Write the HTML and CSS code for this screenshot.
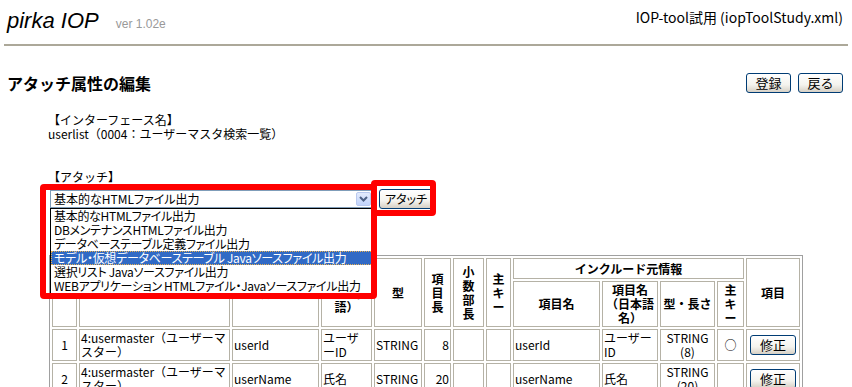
FILE: index.html
```html
<!DOCTYPE html>
<html lang="ja">
<head>
    <meta charset="UTF-8">
    <title>アタッチ属性の編集 - pirka IOP</title>
    <link rel="stylesheet" href="styles.css">
</head>
<body>
    <div class="header">
        <div class="brand"><span class="logo">pirka IOP</span><span class="version">ver 1.02e</span></div>
        <div class="project">IOP-tool試用 (iopToolStudy.xml)</div>
    </div>

    <div class="titlebar">
        <h1>アタッチ属性の編集</h1>
        <div class="actions">
            <button class="btn">登録</button>
            <button class="btn">戻る</button>
        </div>
    </div>

    <div class="content">
        <div class="field">
            <div>【インターフェース名】</div>
            <div>userlist（0004：ユーザーマスタ検索一覧）</div>
        </div>

        <div class="field">
            <div>【アタッチ】</div>
            <div class="attach-row">
                <div class="combo">
                    <span>基本的なHTMLファイル出力</span>
                    <span class="combo-arrow">
                        <svg width="9" height="6" viewBox="0 0 9 6"><path d="M1 1 L4.5 4.5 L8 1" fill="none" stroke="#4d6185" stroke-width="2"/></svg>
                    </span>
                    <ul class="combo-list">
                        <li>基本的なHTMLファイル出力</li>
                        <li>DBメンテナンスHTMLファイル出力</li>
                        <li>データベーステーブル定義ファイル出力</li>
                        <li class="selected">モデル・仮想データベーステーブル Javaソースファイル出力</li>
                        <li>選択リスト Javaソースファイル出力</li>
                        <li>WEBアプリケーション HTMLファイル・Javaソースファイル出力</li>
                    </ul>
                </div>
                <button class="btn btn-attach">アタッチ</button>
                <!-- 注記用の赤枠 -->
                <div class="mark mark-select"></div>
                <div class="mark mark-button"></div>
            </div>
        </div>

        <table class="items">
            <tr>
                <th rowspan="2" class="c-no">No</th>
                <th rowspan="2" class="c-table">テーブル</th>
                <th rowspan="2" class="c-name">項目名</th>
                <th rowspan="2" class="c-jname">項目名（日本語）</th>
                <th rowspan="2" class="c-type">型</th>
                <th rowspan="2" class="c-len">項<br>目<br>長</th>
                <th rowspan="2" class="c-dec">小<br>数<br>部<br>長</th>
                <th rowspan="2" class="c-key">主<br>キ<br>ー</th>
                <th colspan="4" class="group">インクルード元情報</th>
                <th rowspan="2" class="c-edit">項目</th>
            </tr>
            <tr class="sub">
                <th class="c-iname">項目名</th>
                <th class="c-ijname">項目名（日本語名）</th>
                <th class="c-itype">型・長さ</th>
                <th class="c-ikey">主<br>キ<br>ー</th>
            </tr>
            <tr>
                <td class="center">1</td>
                <td>4:usermaster（ユーザーマスター）</td>
                <td>userId</td>
                <td>ユーザーID</td>
                <td>STRING</td>
                <td class="num">8</td>
                <td></td>
                <td></td>
                <td>userId</td>
                <td>ユーザーID</td>
                <td class="center">STRING (8)</td>
                <td class="center">○</td>
                <td class="center"><button class="btn">修正</button></td>
            </tr>
            <tr>
                <td class="center">2</td>
                <td>4:usermaster（ユーザーマスター）</td>
                <td>userName</td>
                <td>氏名</td>
                <td>STRING</td>
                <td class="num">20</td>
                <td></td>
                <td></td>
                <td>userName</td>
                <td>氏名</td>
                <td class="center">STRING (20)</td>
                <td></td>
                <td class="center"><button class="btn">修正</button></td>
            </tr>
        </table>
    </div>
</body>
</html>
```

FILE: styles.css
```css
/* 全体 */
* {
    margin: 0;
    padding: 0;
    box-sizing: border-box;
}

body {
    font-family: "Noto Sans CJK JP", sans-serif;
    font-size: 12px;
    line-height: 14px;
    color: #000;
    background-color: #fff;
}

/* ヘッダー */
.header {
    display: flex;
    justify-content: space-between;
    height: 46px;
    margin: 0 4px;
    padding: 0 5px 0 3px;
    border-bottom: 2px solid #aca899;
}

.brand {
    font-family: "Liberation Sans", sans-serif;
    padding-top: 8px;
}

.logo {
    font-size: 22px;
    line-height: 26px;
    font-style: italic;
}

.version {
    margin-left: 17px;
    font-size: 12px;
    color: #999;
}

.project {
    padding-top: 9px;
    font-size: 14px;
    line-height: 16px;
}

/* タイトル */
.titlebar {
    display: flex;
    justify-content: space-between;
    align-items: center;
    height: 20px;
    margin-top: 27px;
    padding: 0 9px 0 7px;
}

.titlebar h1 {
    font-size: 16px;
    line-height: 20px;
    font-weight: bold;
}

.actions {
    display: flex;
    gap: 7px;
}

.btn {
    font-family: "Noto Sans CJK JP", sans-serif;
    font-size: 13px;
    line-height: 16px;
    width: 45px;
    height: 20px;
    color: #000;
    border: 1px solid #003c74;
    border-radius: 3px;
    background: linear-gradient(#ffffff, #f4f3ee 60%, #d6d0c5);
}

/* 本文 */
.content {
    margin: 20px 0 0 48px;
}

.field {
    margin-bottom: 29px;
}

.attach-row {
    position: relative;
    display: flex;
    align-items: center;
    gap: 6px;
    height: 20px;
    margin-top: 5px;
}

.combo {
    position: relative;
    width: 323px;
    height: 18px;
    margin-left: 2px;
    padding-left: 3px;
    line-height: 16px;
    border: 1px solid #7f9db9;
    background-color: #fff;
    font-feature-settings: "palt";
}

.combo-arrow {
    position: absolute;
    top: 1px;
    right: 1px;
    width: 15px;
    height: 14px;
    display: flex;
    align-items: center;
    justify-content: center;
    border: 1px solid #b9c9ef;
    border-radius: 2px;
    background: linear-gradient(#e3ebfd, #c1d3fb);
}

.combo-list {
    position: absolute;
    top: 17px;
    left: -1px;
    width: 324px;
    list-style: none;
    border: 1px solid #000;
    background-color: #fff;
    z-index: 5;
}

.combo-list li {
    height: 14px;
    line-height: 14px;
    padding-left: 3px;
    white-space: nowrap;
    letter-spacing: -0.3px;
}

.combo-list li.selected {
    color: #fff;
    background-color: #316ac5;
    outline: 1px dotted #e8b050;
    outline-offset: -1px;
}

.btn-attach {
    width: 54px;
    font-size: 12px;
    font-feature-settings: "palt";
}

.mark {
    position: absolute;
    border: 6px solid #f00;
    border-radius: 4px;
    z-index: 6;
}

.mark-select {
    left: -8px;
    top: -5px;
    width: 337px;
    height: 115px;
}

.mark-button {
    left: 323px;
    top: -9px;
    width: 65px;
    height: 36px;
}

/* 項目一覧 */
.items {
    margin: 46px 0 0 1px;
    border: 1px solid #a0a0a0;
    border-spacing: 2px;
}

.items th,
.items td {
    border: 1px solid #b5b2a6;
    padding: 1px;
    vertical-align: middle;
}

.items th {
    font-weight: bold;
    text-align: center;
    height: 45px;
}

.items th.group {
    height: 21px;
}

.items td {
    height: 32px;
    text-align: left;
    line-break: loose;
}

.items td.center {
    text-align: center;
}

.items td.num {
    text-align: right;
}

.items td .btn {
    width: 46px;
}

.c-no { width: 25px; }
.c-table { width: 151px; }
.c-name { width: 87px; }
.c-jname { width: 51px; }
.c-type { width: 48px; }
.c-len { width: 27px; }
.c-dec { width: 31px; }
.c-key { width: 25px; }
.c-iname { width: 87px; }
.c-ijname { width: 56px; }
.c-itype { width: 55px; }
.c-ikey { width: 27px; }
.c-edit { width: 54px; }
```
